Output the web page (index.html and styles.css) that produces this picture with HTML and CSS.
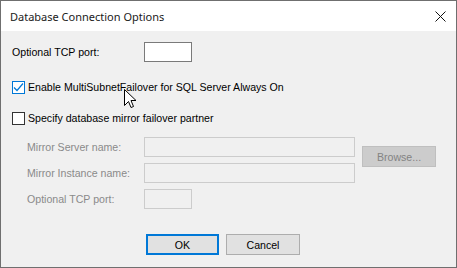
FILE: index.html
```html
<!DOCTYPE html>
<html lang="en">

<head>
    <meta charset="UTF-8">
    <title>Database Connection Options</title>
    <link rel="stylesheet" href="styles.css">
</head>

<body>

    <div class="window">
        <!-- Title bar -->
        <div class="titlebar">
            <span class="title">Database Connection Options</span>
            <span class="close">
                <svg width="11" height="11" viewBox="0 0 11 11">
                    <path d="M0.5 0.5 L10.5 10.5 M10.5 0.5 L0.5 10.5" stroke="#111" stroke-width="1" fill="none"/>
                </svg>
            </span>
        </div>

        <div class="content">
            <div class="row port-row">
                <label class="label">Optional TCP port:</label>
                <span class="field field-small"></span>
            </div>

            <div class="check-row first">
                <span class="check checked">
                    <svg width="11" height="11" viewBox="0 0 11 11">
                        <path d="M1 5.5 L4 8.5 L10 1.5" stroke="#0078d7" stroke-width="1.2" fill="none"/>
                    </svg>
                </span>
                <span class="check-text">Enable MultiSubnetFailover for SQL Server Always On</span>
            </div>

            <div class="check-row second">
                <span class="check"></span>
                <span class="check-text">Specify database mirror failover partner</span>
            </div>

            <!-- Mirror settings (disabled) -->
            <div class="mirror">
                <label class="label disabled">Mirror Server name:</label>
                <span class="field field-wide off"></span>
                <button class="btn browse" disabled>Browse...</button>

                <label class="label disabled">Mirror Instance name:</label>
                <span class="field field-wide off"></span>

                <label class="label disabled">Optional TCP port:</label>
                <span class="field field-small off"></span>
            </div>

            <div class="buttons">
                <button class="btn btn-ok">OK</button>
                <button class="btn">Cancel</button>
            </div>
        </div>

        <svg class="cursor" width="13" height="20" viewBox="0 0 13 20">
            <path d="M0.5 0.5 L0.5 16.5 L4.5 12.5 L7 18.5 L9.5 17.5 L7 11.5 L12 11.5 Z" fill="#fff" stroke="#000" stroke-width="1"/>
        </svg>
    </div>

</body>

</html>
```

FILE: styles.css
```css
* {
    box-sizing: border-box;
    margin: 0;
    padding: 0;
}

body {
    font-family: 'Liberation Sans', Tahoma, sans-serif;
    font-size: 10.6px;
    color: #000;
    background-color: #f0f0f0;
}

.window {
    position: relative;
    width: 457px;
    height: 268px;
    border: 1px solid #6f6f6f;
    background-color: #f0f0f0;
    display: flex;
    flex-direction: column;
}

.titlebar {
    height: 30px;
    background-color: #fff;
    display: flex;
    align-items: center;
    justify-content: space-between;
    padding: 0 10px 0 9px;
}

.title {
    font-family: 'Noto Sans', sans-serif;
    font-size: 11px;
    color: #1a1a1a;
}

.close {
    display: flex;
}

.content {
    padding: 11px 0 0 11px;
}

.row {
    display: flex;
    align-items: center;
}

.label {
    white-space: nowrap;
}

.port-row .label {
    width: 132px;
}

.field {
    display: block;
    height: 20px;
    border: 1px solid #7a7a7a;
    background-color: #fff;
}

.field-small {
    width: 48px;
}

.field-wide {
    width: 211px;
}

.field.off {
    border-color: #cccccc;
    background-color: #f0f0f0;
}

.check-row {
    display: flex;
    align-items: center;
    height: 20px;
    white-space: nowrap;
}

.check-row.first {
    margin-top: 15px;
}

.check-row.second {
    margin-top: 11px;
}

.check {
    width: 13px;
    height: 13px;
    border: 1px solid #333;
    background-color: #fff;
    display: flex;
    align-items: center;
    justify-content: center;
    margin-right: 3px;
}

.check.checked {
    border-color: #0078d7;
}

.mirror {
    display: grid;
    grid-template-columns: 110px 211px 74px;
    grid-auto-rows: 20px;
    column-gap: 7px;
    row-gap: 6px;
    margin-top: 9px;
    padding-left: 15px;
    align-items: center;
}

.label.disabled {
    color: #8a8a8a;
}

.btn {
    width: 74px;
    height: 21px;
    font-family: 'Liberation Sans', Tahoma, sans-serif;
    font-size: 10.6px;
    color: #000;
    background-color: #e1e1e1;
    border: 1px solid #adadad;
}

.browse {
    grid-row: 1 / span 2;
    grid-column: 3;
    align-self: start;
    margin-top: 9px;
    background-color: #cccccc;
    border-color: #bfbfbf;
    color: #838383;
}

.buttons {
    display: flex;
    gap: 7px;
    margin-top: 25px;
    padding-left: 134px;
}

.btn-ok {
    border: 2px solid #0078d7;
    width: 73px;
}

.cursor {
    position: absolute;
    left: 123px;
    top: 88px;
}
```
